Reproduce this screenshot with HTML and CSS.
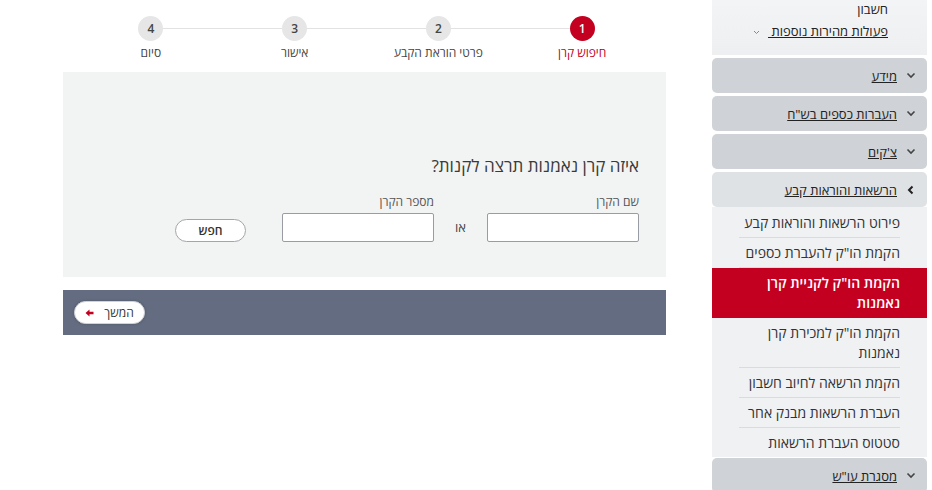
FILE: index.html
```html
<!DOCTYPE html>
<html lang="he" dir="rtl">
<head>
    <meta charset="UTF-8">
    <title>הקמת הו"ק לקניית קרן נאמנות</title>
    <link rel="stylesheet" href="styles.css">
</head>
<body>
    <div class="page">
        <!-- תפריט צד -->
        <aside class="sidebar">
            <div class="quick">
                <div class="quick-account">חשבון</div>
                <a class="quick-more" href="#">פעולות מהירות נוספות&nbsp;</a>
                <svg class="quick-chev" width="7" height="5" viewBox="0 0 7 5"><path d="M1 1l2.5 2.5L6 1" fill="none" stroke="#888" stroke-width="1"/></svg>
            </div>

            <div class="menu-box">
                <svg class="chev" width="10" height="7" viewBox="0 0 10 7"><path d="M1.5 1.5l3.5 3.5 3.5-3.5" fill="none" stroke="#444" stroke-width="1.6"/></svg>
                <a href="#">מידע</a>
            </div>
            <div class="menu-box">
                <svg class="chev" width="10" height="7" viewBox="0 0 10 7"><path d="M1.5 1.5l3.5 3.5 3.5-3.5" fill="none" stroke="#444" stroke-width="1.6"/></svg>
                <a href="#">העברות כספים בש"ח</a>
            </div>
            <div class="menu-box">
                <svg class="chev" width="10" height="7" viewBox="0 0 10 7"><path d="M1.5 1.5l3.5 3.5 3.5-3.5" fill="none" stroke="#444" stroke-width="1.6"/></svg>
                <a href="#">צ'קים</a>
            </div>
            <div class="menu-box open">
                <svg class="chev" width="10" height="10" viewBox="0 0 10 10"><path d="M6.5 1.5L3 5l3.5 3.5" fill="none" stroke="#222" stroke-width="2"/></svg>
                <a href="#">הרשאות והוראות קבע</a>
            </div>

            <ul class="submenu">
                <li><a href="#">פירוט הרשאות והוראות קבע</a></li>
                <li><a href="#">הקמת הו"ק להעברת כספים</a></li>
                <li class="active"><a href="#">הקמת הו"ק לקניית קרן נאמנות</a></li>
                <li><a href="#">הקמת הו"ק למכירת קרן נאמנות</a></li>
                <li><a href="#">הקמת הרשאה לחיוב חשבון</a></li>
                <li><a href="#">העברת הרשאות מבנק אחר</a></li>
                <li><a href="#">סטטוס העברת הרשאות</a></li>
            </ul>

            <div class="menu-box">
                <svg class="chev" width="10" height="7" viewBox="0 0 10 7"><path d="M1.5 1.5l3.5 3.5 3.5-3.5" fill="none" stroke="#444" stroke-width="1.6"/></svg>
                <a href="#">מסגרת עו"ש</a>
            </div>
        </aside>

        <!-- אזור ראשי -->
        <main class="main">
            <ol class="steps">
                <li class="step current"><span class="num">1</span><span class="label">חיפוש קרן</span></li>
                <li class="step"><span class="num">2</span><span class="label">פרטי הוראת הקבע</span></li>
                <li class="step"><span class="num">3</span><span class="label">אישור</span></li>
                <li class="step"><span class="num">4</span><span class="label">סיום</span></li>
            </ol>

            <section class="panel">
                <h2 class="question">איזה קרן נאמנות תרצה לקנות?</h2>
                <div class="search-row">
                    <label class="field">
                        <span class="field-label">שם הקרן</span>
                        <input class="field-input" type="text">
                    </label>
                    <span class="or">או</span>
                    <label class="field">
                        <span class="field-label">מספר הקרן</span>
                        <input class="field-input" type="text">
                    </label>
                    <button class="btn-search" type="button">חפש</button>
                </div>
            </section>

            <div class="action-bar">
                <button class="btn-next" type="button">
                    המשך
                    <svg width="9" height="8" viewBox="0 0 9 8"><path d="M0.5 4L4.5 0.5V2.8H8.5V5.2H4.5V7.5Z" fill="#c3001f"/></svg>
                </button>
            </div>
        </main>
    </div>
</body>
</html>
```

FILE: styles.css
```css
:root {
    --red: #c3001f;
    --text: #333;
    --box: #cfd2d6;
    --box-open: #dfe2e5;
    --side-bg: #eff1f3;
    --panel: #f2f3f3;
    --bar: #646c81;
}

* {
    box-sizing: border-box;
}

body {
    margin: 0;
    background: #fff;
    color: var(--text);
    font-family: "Open Sans", "Liberation Sans", Arial, sans-serif;
    font-size: 14px;
    overflow: hidden;
}

a {
    color: inherit;
}

.page {
    display: flex;
    align-items: flex-start;
    gap: 46px;
    padding: 0 5px 0 63px;
}

/* ---------- sidebar ---------- */

.sidebar {
    width: 215px;
    flex: none;
}

.quick {
    height: 55px;
    margin-bottom: 3px;
    padding: 1px 39px 0 0;
    background: linear-gradient(#f3f4f5, #eeeff1);
}

.quick-account {
    font-size: 13px;
    line-height: 16px;
    color: #222;
}

.quick-more {
    display: inline-block;
    margin-top: 5px;
    font-size: 13px;
    line-height: 18px;
    color: #222;
}

.quick-chev {
    margin-right: 4px;
    vertical-align: 1px;
}

.menu-box {
    display: flex;
    align-items: center;
    gap: 9px;
    height: 35px;
    margin-bottom: 3px;
    padding-right: 11px;
    background: var(--box);
    border-radius: 5px;
    font-size: 13px;
    color: #222;
}

.menu-box.open {
    background: var(--box-open);
    margin-bottom: 0;
}

.menu-box .chev {
    flex: none;
}

.submenu {
    list-style: none;
    margin: 0 0 1px;
    padding: 0;
    background: var(--side-bg);
}

.submenu li {
    padding: 0 27px;
}

.submenu a {
    display: block;
    padding: 5px 0 4px;
    line-height: 20px;
    border-bottom: 1px solid #d9dcdf;
    text-decoration: none;
    color: var(--text);
}

.submenu li:first-child a {
    padding-top: 6px;
}

.submenu li:last-child a {
    border-bottom: 0;
}

.submenu li.active {
    background: var(--red);
}

.submenu li.active a {
    color: #fff;
    font-weight: 600;
    border-bottom: 0;
    padding-bottom: 5px;
}

/* ---------- main ---------- */

.main {
    width: 603px;
    flex: none;
}

.steps {
    list-style: none;
    display: grid;
    grid-template-columns: repeat(4, 1fr);
    height: 72px;
    margin: 0;
    padding: 16px 12px 0 16px;
}

.step {
    position: relative;
    display: flex;
    flex-direction: column;
    align-items: center;
}

.step:not(:last-child)::after {
    content: "";
    position: absolute;
    top: 12px;
    right: 50%;
    width: 100%;
    height: 1px;
    background: #e2e2e2;
    z-index: 0;
}

.num {
    position: relative;
    z-index: 1;
    width: 25px;
    height: 25px;
    border-radius: 50%;
    background: #e6e6e6;
    color: #444;
    font-size: 12px;
    font-weight: 600;
    line-height: 25px;
    text-align: center;
}

.label {
    margin-top: 4px;
    font-size: 12px;
    line-height: 16px;
    color: #444;
}

.step.current .num {
    background: var(--red);
    color: #fff;
}

.step.current .label {
    color: var(--red);
}

.step.current::before {
    content: "";
    position: absolute;
    bottom: -56px;
    left: 50%;
    margin-left: -9px;
    border: 7px solid transparent;
    border-top: 0;
    border-bottom-color: var(--panel);
}

.panel {
    height: 205px;
    background: var(--panel);
    display: flex;
    flex-direction: column;
    justify-content: flex-end;
    padding: 0 27px 35px;
}

.question {
    margin: 0 0 17px;
    font-size: 17px;
    font-weight: 400;
    line-height: 22px;
    color: #3a3a3a;
}

.search-row {
    display: flex;
    align-items: flex-end;
}

.field {
    display: flex;
    flex-direction: column;
    width: 152px;
}

.field-label {
    font-size: 12px;
    line-height: 15px;
    color: #555;
    margin-bottom: 4px;
}

.field-input {
    height: 29px;
    border: 1px solid #9a9ca3;
    border-radius: 2px;
    background: #fff;
    font: inherit;
}

.or {
    width: 53px;
    text-align: center;
    font-size: 13px;
    line-height: 29px;
    color: #444;
}

.btn-search {
    width: 71px;
    height: 23px;
    margin-right: 36px;
    border: 1px solid #a3a5ab;
    border-radius: 12px;
    background: #fff;
    font: inherit;
    font-size: 12px;
    font-weight: 600;
    color: #333;
}

.action-bar {
    margin-top: 13px;
    height: 45px;
    background: var(--bar);
    display: flex;
    align-items: center;
    justify-content: flex-end;
    padding-left: 11px;
}

.btn-next {
    display: flex;
    align-items: center;
    justify-content: center;
    gap: 10px;
    width: 71px;
    height: 23px;
    border: 1px solid #d0d3da;
    border-radius: 12px;
    background: #fff;
    font: inherit;
    font-size: 12px;
    color: #333;
    box-shadow: 0 0 3px rgba(0, 0, 0, 0.2);
}
```
